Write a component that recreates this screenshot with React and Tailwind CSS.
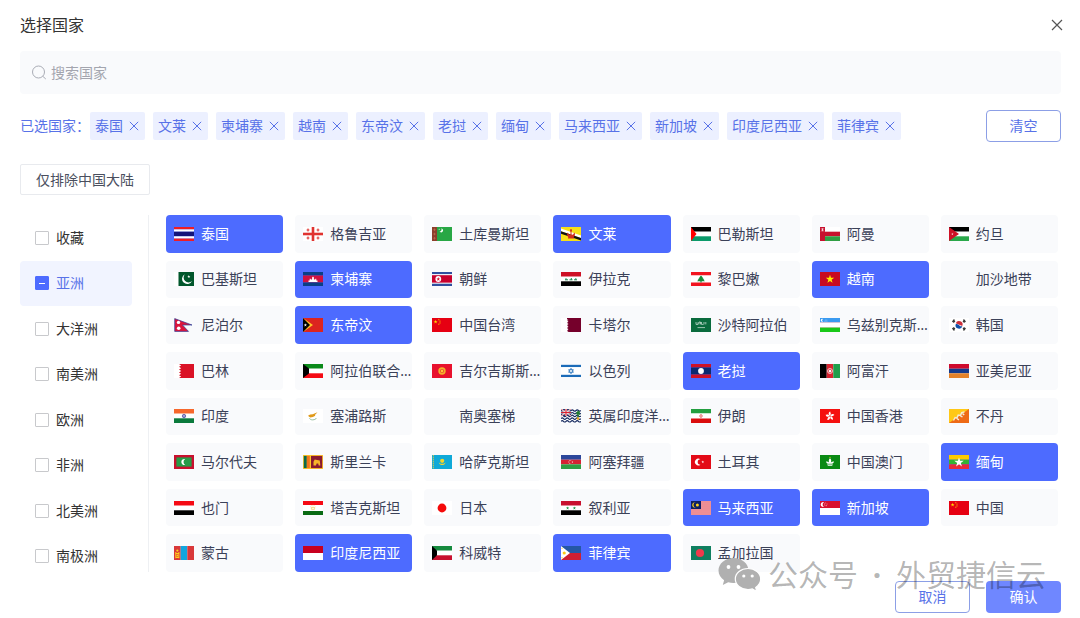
import { useState } from "react";

const STAR = "M0 -1 L0.225 -0.309 L0.951 -0.309 L0.363 0.118 L0.588 0.809 L0 0.382 L-0.588 0.809 L-0.363 0.118 L-0.951 -0.309 L-0.225 -0.309 Z";

const Star = ({ x, y, r, fill }) => <path d={STAR} fill={fill} transform={`translate(${x} ${y}) scale(${r})`} />;

// horizontal bands, each one is [color, height]
const Bands = ({ rows }) => {
    let y = 0;
    return rows.map(([fill, h], i) => {
        const band = <rect key={i} x="0" y={y} width="20" height={h} fill={fill} />;
        y += h;
        return band;
    });
};

// vertical bands, each one is [color, width]
const Cols = ({ cols }) => {
    let x = 0;
    return cols.map(([fill, w], i) => {
        const band = <rect key={i} x={x} y="0" width={w} height="14" fill={fill} />;
        x += w;
        return band;
    });
};

const Bg = ({ fill }) => <rect width="20" height="14" fill={fill} />;

const chinaFlag = (
    <>
        <Bg fill="#e60012" />
        <Star x={3.6} y={3.8} r={2.1} fill="#ffde00" />
        <g fill="#ffb000">
            <circle cx="6.8" cy="1.7" r="0.6" />
            <circle cx="8" cy="3.1" r="0.6" />
            <circle cx="8" cy="4.9" r="0.6" />
            <circle cx="6.8" cy="6.2" r="0.6" />
        </g>
    </>
);

const flags = {
    th: <Bands rows={[["#f01c24", 2.4], ["#fff", 2.3], ["#14147a", 4.6], ["#fff", 2.3], ["#f01c24", 2.4]]} />,
    ge: (
        <>
            <Bg fill="#fff" />
            <g fill="#e0322f">
                <rect x="8.7" width="2.6" height="14" />
                <rect y="5.7" width="20" height="2.6" />
                {[[5, 3], [15, 3], [5, 11], [15, 11]].map(([x, y]) => (
                    <path key={`${x}-${y}`} d={`M${x - 0.5} ${y - 1.4}h1v0.9h0.9v1h-0.9v0.9h-1v-0.9h-0.9v-1h0.9z`} />
                ))}
            </g>
        </>
    ),
    tm: (
        <>
            <Bg fill="#28a745" />
            <rect width="5" height="14" fill="#8d3f2c" />
            <path d="M2.5 1.200l1.200 1.500L2.500 4.200 1.300 2.700zM2.500 5.500l1.200 1.500L2.500 8.500 1.300 7zM2.500 9.800l1.200 1.500L2.500 12.800l-1.200-1.500z" fill="#b8694a" />
            <path d="M9.2 1.4a2 2 0 1 1-1.7 3.2 2 2 0 0 0 1.7-3.2z" fill="#fff" />
            <circle cx="7.2" cy="2.2" r="0.5" fill="#fff" />
        </>
    ),
    bn: (
        <>
            <Bg fill="#f7e017" />
            <path d="M0 1.5L20 8.5v2.6L0 4.2z" fill="#fff" />
            <path d="M0 4.2L20 11v2.6L0 6.8z" fill="#111" />
            <path d="M9.5 2h1v7h-1zM6.7 5.5a3.4 3.4 0 0 0 6.6 0l0.7 1.2a4 4 0 0 1-8 0zM7 10.2h6v1.2H7z" fill="#cf2b1e" />
            <circle cx="10" cy="3.4" r="1" fill="#cf2b1e" />
        </>
    ),
    ps: (
        <>
            <Bands rows={[["#000", 4.7], ["#fff", 4.6], ["#0b9a6a", 4.7]]} />
            <path d="M0 0l5.5 7L0 14z" fill="#f00" />
        </>
    ),
    om: (
        <>
            <Bands rows={[["#fff", 4.7], ["#c8102e", 4.6], ["#2f9e44", 4.7]]} />
            <rect width="5" height="14" fill="#c8102e" />
            <path d="M1.2 1.4l2.6 3M3.8 1.4l-2.6 3M2.5 1v3.4" stroke="#fff" strokeWidth="0.6" />
        </>
    ),
    jo: (
        <>
            <Bands rows={[["#000", 4.7], ["#fff", 4.6], ["#2aa84a", 4.7]]} />
            <path d="M0 0l10 7L0 14z" fill="#ce1126" />
            <Star x={3.4} y={7} r={1.2} fill="#fff" />
        </>
    ),
    pk: (
        <>
            <Bg fill="#fff" />
            <rect x="4.5" width="15.5" height="14" fill="#01572c" />
            <path d="M11 2.200a5.200 5.200 0 1 0 7 6.800 4.800 4.800 0 1 1-7-6.800z" fill="#fff" />
            <Star x={14.8} y={4.6} r={1.6} fill="#fff" />
        </>
    ),
    kh: (
        <>
            <Bands rows={[["#0a3f86", 3.5], ["#d0103f", 7], ["#0a3f86", 3.5]]} />
            <path d="M5.5 10V8.4h1.2V6.8h1v0.8h1.4V5.6l0.9-1 0.9 1v2h1.4v-0.8h1v1.6h1.2V10z" fill="#fff" />
        </>
    ),
    kp: (
        <>
            <Bands rows={[["#2f4f9f", 2.3], ["#fff", 0.9], ["#c8002d", 7.6], ["#fff", 0.9], ["#2f4f9f", 2.3]]} />
            <circle cx="6.3" cy="7" r="2.9" fill="#fff" />
            <Star x={6.3} y={7.1} r={2.1} fill="#d8102d" />
        </>
    ),
    iq: (
        <>
            <Bands rows={[["#ce1126", 4.7], ["#fff", 4.6], ["#000", 4.7]]} />
            <path d="M4 7.8h3M5 6.2v1.4M8.5 7.8h3M10.3 6v1.8M13 7.8h3M14.8 6.2v1.4" stroke="#007a3d" strokeWidth="0.9" />
        </>
    ),
    lb: (
        <>
            <Bands rows={[["#f2141f", 3.5], ["#fff", 7], ["#f2141f", 3.5]]} />
            <path d="M10 3.600l2 2.200h-0.700l2 1.800h-0.900l1.500 1.600h-3.300v1.200h-1.200V9.200H6.100l1.500-1.600H6.700l2-1.800H8z" fill="#188a3a" />
        </>
    ),
    vn: (
        <>
            <Bg fill="#c80a22" />
            <Star x={10} y={7.2} r={4.4} fill="#ffee00" />
        </>
    ),
    np: (
        <>
            <path d="M0.700 0.600L18 7H8.500l6 6.400H0.700z" fill="#dc143c" stroke="#2b3f9b" strokeWidth="0.700" />
            <circle cx="4.500" cy="4.400" r="1.700" fill="#fff" />
            <circle cx="4.700" cy="10.300" r="1.800" fill="#fff" />
        </>
    ),
    tl: (
        <>
            <Bg fill="#dc241f" />
            <path d="M0 0l10 7L0 14z" fill="#ffc726" />
            <path d="M0 0l7 7L0 14z" fill="#000" />
            <Star x={2.4} y={7} r={1.7} fill="#fff" />
        </>
    ),
    cn: chinaFlag,
    qa: (
        <>
            <Bg fill="#fff" />
            <path d="M6 0h14v14H6l1.500-0.800L6 12.400l1.500-0.800L6 10.800l1.500-0.800L6 9.200l1.500-0.800L6 7.600 7.500 6.800 6 6l1.500-0.800L6 4.400l1.500-0.800L6 2.800 7.500 2 6 1.200z" fill="#75002b" />
        </>
    ),
    sa: (
        <>
            <Bg fill="#0a6b3d" />
            <path d="M5 4v2.400h2V4.300M8 6.400V4h1.500v2.400M10.500 4v2.400h2M13 4v2.400M14.800 4v2.400" stroke="#fff" strokeWidth="0.600" fill="none" />
            <path d="M6.500 9.600h7.500" stroke="#fff" strokeWidth="0.600" />
        </>
    ),
    uz: (
        <>
            <Bands rows={[["#3a9af0", 4.4], ["#e34f5a", 0.3], ["#fff", 4.6], ["#e34f5a", 0.3], ["#19c819", 4.4]]} />
            <path d="M3 1a1.500 1.500 0 1 0 0 2.600 1.600 1.600 0 0 1 0-2.600z" fill="#fff" />
            <path d="M4.500 3.200h3M5.500 2h2" stroke="#fff" strokeWidth="0.500" strokeDasharray="0.600 0.500" />
        </>
    ),
    kr: (
        <>
            <Bg fill="#fff" />
            <path d="M6.800 5.300a3.400 3.400 0 0 1 6.500 2.600z" fill="#cd2e3a" />
            <path d="M6.700 6.300a3.400 3.400 0 1 0 6.600 1.600C11.500 9.200 10.600 7.300 9.600 6.700 8.600 6 7.500 5.600 6.700 6.300z" fill="#0f4fa8" />
            <path d="M3.400 3.900l2-2.400M4.400 4.700l1.500-1.900M14.500 1.500l2 2.400M14 2.800l1.500 1.900M3.400 10.100l2 2.400M4.400 9.300l1.500 1.900M14.500 12.500l2-2.400M14 11.200l1.500-1.900" stroke="#333" strokeWidth="1.200" />
        </>
    ),
    bh: (
        <>
            <Bg fill="#fff" />
            <path d="M5 0h15v14H5l2.200-1.400L5 11.200l2.200-1.400L5 8.400 7.200 7 5 5.600l2.200-1.400L5 2.800l2.200-1.400z" fill="#da1226" />
        </>
    ),
    ae: (
        <>
            <Bands rows={[["#0a8a1a", 4.7], ["#fff", 4.6], ["#f50a14", 4.7]]} />
            <path d="M0 0l6 4.500v5L0 14z" fill="#000" />
        </>
    ),
    kg: (
        <>
            <Bg fill="#e8112d" />
            <circle cx="10" cy="7" r="3.700" fill="#f3b02a" />
            <circle cx="10" cy="7" r="2.100" fill="#e8512d" />
            <circle cx="10" cy="7" r="1.200" fill="#ffc93a" />
        </>
    ),
    il: (
        <>
            <Bands rows={[["#fff", 0.8], ["#1b6bb8", 2.4], ["#fff", 7.6], ["#1b6bb8", 2.4], ["#fff", 0.8]]} />
            <path d="M10 4.200l2.400 4.100H7.600zM10 9.800L7.600 5.700h4.800z" fill="none" stroke="#1b6bb8" strokeWidth="0.700" />
        </>
    ),
    la: (
        <>
            <Bands rows={[["#ce1126", 3.5], ["#0a2a70", 7], ["#ce1126", 3.5]]} />
            <circle cx="10" cy="7" r="2.900" fill="#fff" />
        </>
    ),
    af: (
        <>
            <Cols cols={[["#000", 6.7], ["#d8232f", 6.6], ["#1f9e4a", 6.7]]} />
            <circle cx="10" cy="7" r="2.500" fill="none" stroke="#fff" strokeWidth="0.700" />
            <path d="M8.800 8.200V6.600L10 5.600l1.200 1v1.600z" fill="#fff" />
        </>
    ),
    am: <Bands rows={[["#cf0a2c", 4.7], ["#143a8c", 4.6], ["#e3822a", 4.7]]} />,
    in: (
        <>
            <Bands rows={[["#f7682c", 4.7], ["#fff", 4.6], ["#0a7a3c", 4.7]]} />
            <circle cx="10" cy="7" r="1.700" fill="#b9b9e0" stroke="#27278c" strokeWidth="0.600" />
            <circle cx="10" cy="7" r="0.500" fill="#27278c" />
        </>
    ),
    cy: (
        <>
            <Bg fill="#fff" />
            <path d="M5.200 6.500l2-0.900 2.500-0.300 4.800-2-2.600 2.700 0.400 0.800-2.400 1.300-2.600 0.400-1.600-0.900z" fill="#e09a1a" />
            <path d="M6.400 9.300c1 1.600 3 1.700 3.600 1.500 1.500 0 2.900-0.700 3.500-1.800" fill="none" stroke="#7fae8a" strokeWidth="0.800" />
        </>
    ),
    io: (
        <>
            <Bg fill="#fff" />
            <path d="M0 1.500q1.250-1.400 2.500 0t2.500 0 2.500 0 2.500 0 2.500 0 2.500 0 2.500 0 2.500 0M0 4.200q1.250-1.400 2.500 0t2.500 0 2.500 0 2.500 0 2.500 0 2.500 0 2.500 0 2.500 0M0 6.900q1.250-1.400 2.500 0t2.500 0 2.500 0 2.500 0 2.500 0 2.500 0 2.500 0 2.500 0M0 9.600q1.250-1.400 2.500 0t2.500 0 2.500 0 2.500 0 2.500 0 2.500 0 2.500 0 2.500 0M0 12.300q1.250-1.400 2.500 0t2.500 0 2.500 0 2.500 0 2.500 0 2.500 0 2.500 0 2.500 0" fill="none" stroke="#14285f" strokeWidth="1.200" />
            <rect width="10" height="7" fill="#14285f" />
            <path d="M0 0l10 7M10 0L0 7" stroke="#fff" strokeWidth="1.400" />
            <path d="M0 0l10 7M10 0L0 7" stroke="#d8202f" strokeWidth="0.500" />
            <path d="M5 0v7M0 3.500h10" stroke="#fff" strokeWidth="2.200" />
            <path d="M5 0v7M0 3.500h10" stroke="#d8202f" strokeWidth="1.200" />
            <path d="M15 4.500l2-2.600 2 1.200-1 0.600 1 1.800-1.700-0.600V8h-0.700V5z" fill="#1f7a2e" stroke="#1f7a2e" strokeWidth="0.600" />
            <circle cx="17" cy="9.500" r="1.300" fill="#e8a21a" />
        </>
    ),
    ir: (
        <>
            <Bands rows={[["#239f40", 4.5], ["#fff", 5], ["#da0d0d", 4.5]]} />
            <circle cx="10" cy="7" r="1.300" fill="none" stroke="#e05050" strokeWidth="0.700" />
            <path d="M10 5.400v3.200" stroke="#e05050" strokeWidth="0.500" />
        </>
    ),
    hk: (
        <>
            <Bg fill="#f5100f" />
            <g transform="translate(10 7.200)" fill="#fff">
                {[0, 72, 144, 216, 288].map((a) => (
                    <path key={a} d="M0 -0.300C-2 -1.600 -1.600 -4 0.300 -4.600C0 -3.600 1.800 -2.600 0 -0.300z" transform={`rotate(${a})`} />
                ))}
            </g>
        </>
    ),
    bt: (
        <>
            <Bg fill="#ffc817" />
            <path d="M20 0v14H0z" fill="#ee6a16" />
            <path d="M4.500 11.500l1.600-3 1.800 0.600 1.300-3 2.300 0.300 1.200-2.800 2.800-0.700M8 9.600l2 1.200M11.500 7l2 0.800M13.500 4.500l1.700 1.600" fill="none" stroke="#f4ead6" strokeWidth="1.400" />
        </>
    ),
    mv: (
        <>
            <Bg fill="#c8102e" />
            <rect x="2.400" y="2.400" width="15.200" height="9.200" fill="#259c48" />
            <path d="M11.200 4a3.100 3.100 0 1 0 0 6 3.500 3.500 0 0 1 0-6z" fill="#fff" />
        </>
    ),
    lk: (
        <>
            <Bg fill="#ffc52a" />
            <rect x="0.800" y="0.900" width="3" height="12.200" fill="#0a6b4a" />
            <rect x="3.800" y="0.900" width="3" height="12.200" fill="#f2741c" />
            <rect x="8" y="0.900" width="11.200" height="12.200" fill="#8a1a30" />
            <path d="M10.500 10.500V6.800l1.200-2.400 2.400 0.700 2.700 0.400 0.500 5h-1.600l-0.500-2h-1.600l-0.600 2z" fill="#f7b52a" />
        </>
    ),
    kz: (
        <>
            <Bg fill="#0fa9d8" />
            <path d="M1.300 0v14" stroke="#e8cf3a" strokeWidth="0.900" strokeDasharray="1.400 0.600" />
            <circle cx="10.200" cy="5.800" r="2.100" fill="#f3d52a" />
            <path d="M6.800 7.200c0.600 2.300 2 2.900 3.400 2.900s2.800-0.600 3.400-2.900c-0.900 1.300-2 1.500-3.400 1.500s-2.500-0.200-3.400-1.500z" fill="#f3d52a" />
        </>
    ),
    az: (
        <>
            <Bands rows={[["#2b479b", 4.7], ["#d52233", 4.6], ["#2f9e44", 4.7]]} />
            <path d="M10.500 5.200a2 2 0 1 0 0 3.600 1.900 1.900 0 1 1 0-3.600z" fill="#fff" />
            <Star x={11.400} y={7} r={1} fill="#fff" />
        </>
    ),
    tr: (
        <>
            <Bg fill="#e30a17" />
            <path d="M9.400 4.300a3.400 3.400 0 1 0 0 5.400 2.700 2.700 0 1 1 0-5.400z" fill="#fff" />
            <Star x={11.800} y={7} r={1.400} fill="#fff" />
        </>
    ),
    mo: (
        <>
            <Bg fill="#0a8a14" />
            <path d="M10 3.200c1.500 1.400 1.500 3 0.800 4.300 1-0.900 2.200-1.300 3.200-1-0.200 1.300-1 2-2 2.200H8c-1-0.200-1.800-0.900-2-2.200 1-0.300 2.200 0.100 3.200 1-0.700-1.300-0.700-2.900 0.800-4.300z" fill="#fff" />
            <path d="M7 9.600h6l-1 1.200H8z" fill="#fff" />
            <Star x={10} y={2.300} r={0.900} fill="#ffe000" />
        </>
    ),
    mm: (
        <>
            <Bands rows={[["#fecb00", 4.7], ["#34b233", 4.6], ["#ea2839", 4.7]]} />
            <Star x={10} y={7.400} r={5} fill="#fff" />
        </>
    ),
    ye: <Bands rows={[["#f50a14", 4.7], ["#fff", 4.6], ["#000", 4.7]]} />,
    tj: (
        <>
            <Bands rows={[["#f50a14", 4], ["#fff", 6], ["#0a6b14", 4]]} />
            <path d="M8.200 8.600h3.600M8.500 8l-0.300-1.600 1.100 0.700L10 5.800l0.700 1.300 1.100-0.700L11.500 8" fill="none" stroke="#ecc94b" strokeWidth="0.600" />
            <path d="M7.600 5.400a3.200 3.200 0 0 1 4.800 0" fill="none" stroke="#ecc94b" strokeWidth="0.600" strokeDasharray="0.600 0.500" />
        </>
    ),
    jp: (
        <>
            <Bg fill="#fff" />
            <circle cx="10" cy="7" r="4.400" fill="#f50a0a" />
        </>
    ),
    sy: (
        <>
            <Bands rows={[["#c8102e", 4.7], ["#fff", 4.6], ["#000", 4.7]]} />
            <Star x={6.600} y={7.100} r={1.700} fill="#15923f" />
            <Star x={13.400} y={7.100} r={1.700} fill="#15923f" />
        </>
    ),
    my: (
        <>
            <Bg fill="#fbd9db" />
            <path d="M0 1h20M0 3h20M0 5h20M0 7h20M0 9h20M0 11h20M0 13h20" stroke="#e2454e" strokeWidth="1" />
            <rect width="10" height="8" fill="#0c1f66" />
            <path d="M4.800 1.600a2.600 2.600 0 1 0 0 4.800 2.300 2.300 0 1 1 0-4.800z" fill="#ffd21a" />
            <circle cx="6.400" cy="4" r="1.500" fill="#ffd21a" />
        </>
    ),
    sg: (
        <>
            <Bands rows={[["#d8102e", 7], ["#fff", 7]]} />
            <path d="M4 1.200a2.500 2.500 0 1 0 0 4.700 2.700 2.700 0 0 1 0-4.700z" fill="#fff" />
            <g fill="#fff">
                <circle cx="5.700" cy="1.900" r="0.450" />
                <circle cx="7" cy="3" r="0.450" />
                <circle cx="4.600" cy="3" r="0.450" />
                <circle cx="5" cy="4.700" r="0.450" />
                <circle cx="6.500" cy="4.700" r="0.450" />
            </g>
        </>
    ),
    mn: (
        <>
            <Cols cols={[["#d9383a", 6.7], ["#12a5de", 6.6], ["#d9383a", 6.7]]} />
            <path d="M1.300 6v6.200h1V6zM4.400 6v6.200h1V6zM2.300 7h2.100v1H2.300zM2.300 10.800h2.100v1.300H2.300z" fill="#ffcf1a" />
            <circle cx="3.350" cy="4.600" r="1.100" fill="#ffcf1a" />
            <circle cx="3.350" cy="9.400" r="0.900" fill="#ffcf1a" />
        </>
    ),
    id: <Bands rows={[["#c8001f", 7], ["#fff", 7]]} />,
    kw: (
        <>
            <Bands rows={[["#158a3e", 4.7], ["#fff", 4.6], ["#c8102e", 4.7]]} />
            <path d="M0 0l5 4.700v4.600L0 14z" fill="#000" />
        </>
    ),
    ph: (
        <>
            <Bands rows={[["#2457a6", 7], ["#ce1f33", 7]]} />
            <path d="M0 0l9 7-9 7z" fill="#fff" />
            <circle cx="3.200" cy="7" r="1.600" fill="#fcc917" />
            <circle cx="1" cy="2.300" r="0.600" fill="#fcc917" />
            <circle cx="1" cy="11.700" r="0.600" fill="#fcc917" />
        </>
    ),
    bd: (
        <>
            <Bg fill="#0f7f60" />
            <circle cx="9" cy="7" r="4.100" fill="#ee3a4c" />
        </>
    ),
};

const countries = [
    ["th", "泰国"], ["ge", "格鲁吉亚"], ["tm", "土库曼斯坦"], ["bn", "文莱"], ["ps", "巴勒斯坦"], ["om", "阿曼"], ["jo", "约旦"],
    ["pk", "巴基斯坦"], ["kh", "柬埔寨"], ["kp", "朝鲜"], ["iq", "伊拉克"], ["lb", "黎巴嫩"], ["vn", "越南"], ["", "加沙地带"],
    ["np", "尼泊尔"], ["tl", "东帝汶"], ["cn", "中国台湾"], ["qa", "卡塔尔"], ["sa", "沙特阿拉伯"], ["uz", "乌兹别克斯坦"], ["kr", "韩国"],
    ["bh", "巴林"], ["ae", "阿拉伯联合酋长国"], ["kg", "吉尔吉斯斯坦"], ["il", "以色列"], ["la", "老挝"], ["af", "阿富汗"], ["am", "亚美尼亚"],
    ["in", "印度"], ["cy", "塞浦路斯"], ["", "南奥塞梯"], ["io", "英属印度洋领地"], ["ir", "伊朗"], ["hk", "中国香港"], ["bt", "不丹"],
    ["mv", "马尔代夫"], ["lk", "斯里兰卡"], ["kz", "哈萨克斯坦"], ["az", "阿塞拜疆"], ["tr", "土耳其"], ["mo", "中国澳门"], ["mm", "缅甸"],
    ["ye", "也门"], ["tj", "塔吉克斯坦"], ["jp", "日本"], ["sy", "叙利亚"], ["my", "马来西亚"], ["sg", "新加坡"], ["cn", "中国"],
    ["mn", "蒙古"], ["id", "印度尼西亚"], ["kw", "科威特"], ["ph", "菲律宾"], ["bd", "孟加拉国"],
];

const regions = ["收藏", "亚洲", "大洋洲", "南美洲", "欧洲", "非洲", "北美洲", "南极洲"];

const defaultSelected = ["泰国", "文莱", "柬埔寨", "越南", "东帝汶", "老挝", "缅甸", "马来西亚", "新加坡", "印度尼西亚", "菲律宾"];

const Cross = ({ className }) => (
    <svg viewBox="0 0 12 12" className={className} fill="none" stroke="currentColor" strokeWidth="1.200">
        <path d="M1 1l10 10M11 1L1 11" />
    </svg>
);

const Flag = ({ code }) => (
    <svg viewBox="0 0 20 14" className="h-3.5 w-5 shrink-0" aria-hidden="true">
        {flags[code]}
    </svg>
);

const Watermark = () => (
    <div className="pointer-events-none absolute right-[34px] bottom-[25px] flex items-center text-black/30">
        <svg viewBox="0 0 43 36" className="mr-[7px] h-9 w-[43px]">
            <path d="M15.500 1C7 1 0.500 6.600 0.500 13.500c0 4 2.200 7.400 5.600 9.700L4.800 28l5.400-2.800c1.700 0.500 3.500 0.800 5.300 0.800 8.500 0 15-5.600 15-12.500S24 1 15.500 1z" fill="#b0b0b0" />
            <path d="M30 11.500c-7 0-12.700 4.700-12.700 10.500S23 32.500 30 32.500c1.500 0 3-0.200 4.300-0.600l4.400 2.600-1-4.100c3-1.900 5-4.900 5-8.400 0-5.800-5.700-10.500-12.700-10.500z" fill="#b0b0b0" stroke="#fff" strokeWidth="1.200" />
            <g fill="#fff">
                <circle cx="10.500" cy="10" r="1.900" />
                <circle cx="20.500" cy="10" r="1.900" />
                <circle cx="25.800" cy="19" r="1.600" />
                <circle cx="34.200" cy="19" r="1.600" />
            </g>
        </svg>
        <div className="flex text-3xl leading-9">
            <span>公众号</span>
            <span className="w-[38px] text-center font-bold">·</span>
            <span>外贸捷信云</span>
        </div>
    </div>
);

const App = () => {
    const [selected, setSelected] = useState(defaultSelected);
    const [keyword, setKeyword] = useState("");
    const [region, setRegion] = useState("亚洲");

    const toggle = (name) =>
        setSelected(selected.includes(name) ? selected.filter((n) => n !== name) : [...selected, name]);

    return (
        <div className="relative bg-white pt-3 pr-[19px] pb-[5px] pl-5 font-['Noto_Sans','Noto_Sans_CJK_SC',sans-serif] text-sm text-[#333]">

            {/* HEADER */}
            <div className="flex h-[26px] items-center justify-between">
                <h1 className="text-base">选择国家</h1>
                <button aria-label="关闭" className="-mr-0.5 text-[#555]">
                    <Cross className="h-3 w-3" />
                </button>
            </div>

            {/* SEARCH */}
            <label className="mt-[13px] flex h-[43px] items-center gap-1 rounded-sm bg-[#f9fafc] px-3">
                <svg viewBox="0 0 15 15" className="h-[15px] w-[15px] shrink-0 text-[#a9acb5]" fill="none" stroke="currentColor">
                    <circle cx="6.500" cy="7" r="6" />
                    <path d="M10.800 11.300l3 2.700" />
                </svg>
                <input
                    aria-label="搜索国家"
                    placeholder="搜索国家"
                    value={keyword}
                    onChange={(e) => setKeyword(e.target.value)}
                    className="flex-1 bg-transparent outline-none placeholder:text-[#a3a5ae]"
                />
            </label>

            {/* SELECTED */}
            <div className="mt-4 flex items-center justify-between text-[#5872e8]">
                <div className="flex flex-wrap items-center gap-y-1">
                    <span>已选国家：</span>
                    <div className="flex flex-wrap gap-2">
                        {selected.map((name) => (
                            <span key={name} className="flex h-7 items-center gap-[5px] rounded-xs bg-[#ecf0ff] px-[5px]">
                                {name}
                                <button aria-label={`移除${name}`} onClick={() => toggle(name)} className="p-px">
                                    <Cross className="h-2.5 w-2.5" />
                                </button>
                            </span>
                        ))}
                    </div>
                </div>
                <button onClick={() => setSelected([])} className="h-8 w-[75px] shrink-0 rounded border border-[#8c9fe6] bg-white">
                    清空
                </button>
            </div>

            <button className="mt-[22px] block h-[31px] rounded-xs border border-[#e8eaee] bg-white px-[15px] text-[#4a4f5e]">
                仅排除中国大陆
            </button>

            <div className="mt-5 flex items-start">

                {/* REGIONS */}
                <div className="grid h-91 w-28 shrink-0 grid-rows-8">
                    {regions.map((name) => (
                        <label
                            key={name}
                            onClick={() => setRegion(name)}
                            className={`flex items-center gap-[7px] rounded pl-[15px] ${region === name ? "bg-[#f1f4ff] text-[#5872e8]" : ""}`}
                        >
                            <input
                                type="checkbox"
                                className={`grid h-3.5 w-3.5 appearance-none place-content-center rounded-[1px] border ${region === name ? "border-[#4d6bff] bg-[#4d6bff] before:h-px before:w-1.5 before:bg-white" : "border-[#c8c9cc] bg-white"}`}
                            />
                            {name}
                        </label>
                    ))}
                </div>

                {/* COUNTRIES */}
                <div className="mr-[3px] ml-4 grid h-[357px] flex-1 grid-cols-7 grid-rows-8 gap-x-3 gap-y-2 border-l border-[#eef0f3] pl-[17px]">
                    {countries.map(([code, name]) => (
                        <button
                            key={name}
                            aria-pressed={selected.includes(name)}
                            onClick={() => toggle(name)}
                            className={`flex min-w-0 items-center gap-[7px] rounded pl-2 text-left ${selected.includes(name) ? "bg-[#4d6bff] text-white" : "bg-[#f9fafc] text-[#3b4158]"}`}
                        >
                            <Flag code={code} />
                            <span className="truncate">{name}</span>
                        </button>
                    ))}
                </div>

            </div>

            {/* FOOTER */}
            <div className="mt-0.5 flex justify-end gap-4">
                <button className="h-8 w-[75px] rounded border border-[#8c9fe6] bg-white text-[#5872e8]">取消</button>
                <button className="h-8 w-[75px] rounded bg-[#6f87ff] text-white">确认</button>
            </div>

            <Watermark />
        </div>
    );
};

export default App;
